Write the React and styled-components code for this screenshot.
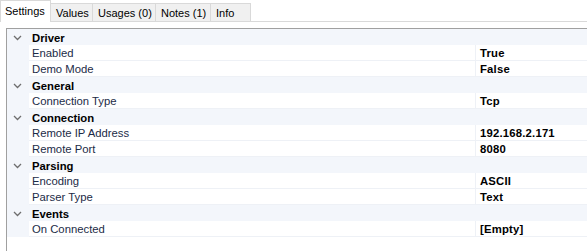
import React from "react";
import styled, { createGlobalStyle } from "styled-components";

const Global = createGlobalStyle`
  html, body { margin: 0; padding: 0; background: #ffffff; overflow: hidden; }
  body { font-family: "Liberation Sans", Arial, sans-serif; font-size: 11.3px; color: #000; }
`;

const Root = styled.div`
  width: 587px;
  height: 251px;
  display: flex;
  flex-direction: column;
  background: #fff;
`;

const TabStrip = styled.div`
  display: flex;
  align-items: flex-end;
  height: 22px;
`;

const Tab = styled.div`
  box-sizing: border-box;
  height: ${(p) => (p.$active ? "22px" : "19px")};
  padding: ${(p) => (p.$active ? "0 0 1px 4px" : "0 0 0 5px")};
  width: ${(p) => p.$w}px;
  display: flex;
  align-items: center;
  background: ${(p) => (p.$active ? "#ffffff" : "#f0f0f0")};
  border: 1px solid #d9d9d9;
  border-bottom: ${(p) => (p.$active ? "none" : "1px solid #d9d9d9")};
  margin-left: ${(p) => (p.$first ? "0" : "-1px")};
  position: relative;
  z-index: ${(p) => (p.$active ? 1 : 0)};
  color: #000;
  white-space: nowrap;
  font-size: 11px;
`;

const StripFill = styled.div`
  flex: 1;
  height: 1px;
  background: #d9d9d9;
`;

const Page = styled.div`
  flex: 1;
  padding: 6px 0 0 6px;
  display: flex;
`;

const Grid = styled.div`
  width: 580px;
  border-top: 1px solid #a0a0a0;
  border-left: 1px solid #a0a0a0;
  background: #ffffff;
  display: flex;
  flex-direction: column;
`;

const CategoryRow = styled.div`
  height: 16px;
  display: flex;
  align-items: center;
  background: #f3f6fb;
  font-weight: bold;
  color: #000;
  padding-top: 1px;
  box-sizing: border-box;
`;

const Chevron = styled.div`
  width: 25px;
  display: flex;
  align-items: center;
  padding-left: 6px;
  box-sizing: border-box;
`;

const PropRow = styled.div`
  height: 16px;
  display: flex;
  background: #f3f6fb;
`;

const NameCell = styled.div`
  margin-left: 22px;
  width: 446px;
  box-sizing: border-box;
  padding: 1px 0 0 3px;
  background: #ffffff;
  border-bottom: 1px solid #eef1f6;
  display: flex;
  align-items: center;
  color: #1b2b47;
  white-space: nowrap;
`;

const ValueCell = styled.div`
  flex: 1;
  box-sizing: border-box;
  padding: 1px 0 0 4px;
  background: #ffffff;
  border-left: 1px solid #eef1f6;
  border-bottom: 1px solid #eef1f6;
  display: flex;
  align-items: center;
  font-weight: bold;
  letter-spacing: 0.2px;
  color: #000;
  white-space: nowrap;
`;

const ChevronIcon = () => (
  <svg width="9" height="6" viewBox="0 0 9 6">
    <path d="M1 1 L4.5 4.5 L8 1" fill="none" stroke="#6e6e6e" strokeWidth="1.3" />
  </svg>
);

const data = [
  { cat: "Driver", props: [["Enabled", "True"], ["Demo Mode", "False"]] },
  { cat: "General", props: [["Connection Type", "Tcp"]] },
  { cat: "Connection", props: [["Remote IP Address", "192.168.2.171"], ["Remote Port", "8080"]] },
  { cat: "Parsing", props: [["Encoding", "ASCII"], ["Parser Type", "Text"]] },
  { cat: "Events", props: [["On Connected", "[Empty]"]] },
];

const tabs = [
  { label: "Settings", w: 51, active: true },
  { label: "Values", w: 43 },
  { label: "Usages (0)", w: 64 },
  { label: "Notes (1)", w: 56 },
  { label: "Info", w: 41 },
];

export default function App() {
  return (
    <Root>
      <Global />
      <TabStrip>
        {tabs.map((t, i) => (
          <Tab key={t.label} $active={t.active} $first={i === 0} $w={t.w}>
            {t.label}
          </Tab>
        ))}
        <StripFill />
      </TabStrip>
      <Page>
        <Grid>
          {data.map((c) => (
            <React.Fragment key={c.cat}>
              <CategoryRow>
                <Chevron>
                  <ChevronIcon />
                </Chevron>
                {c.cat}
              </CategoryRow>
              {c.props.map(([n, v]) => (
                <PropRow key={n}>
                  <NameCell>{n}</NameCell>
                  <ValueCell>{v}</ValueCell>
                </PropRow>
              ))}
            </React.Fragment>
          ))}
        </Grid>
      </Page>
    </Root>
  );
}
